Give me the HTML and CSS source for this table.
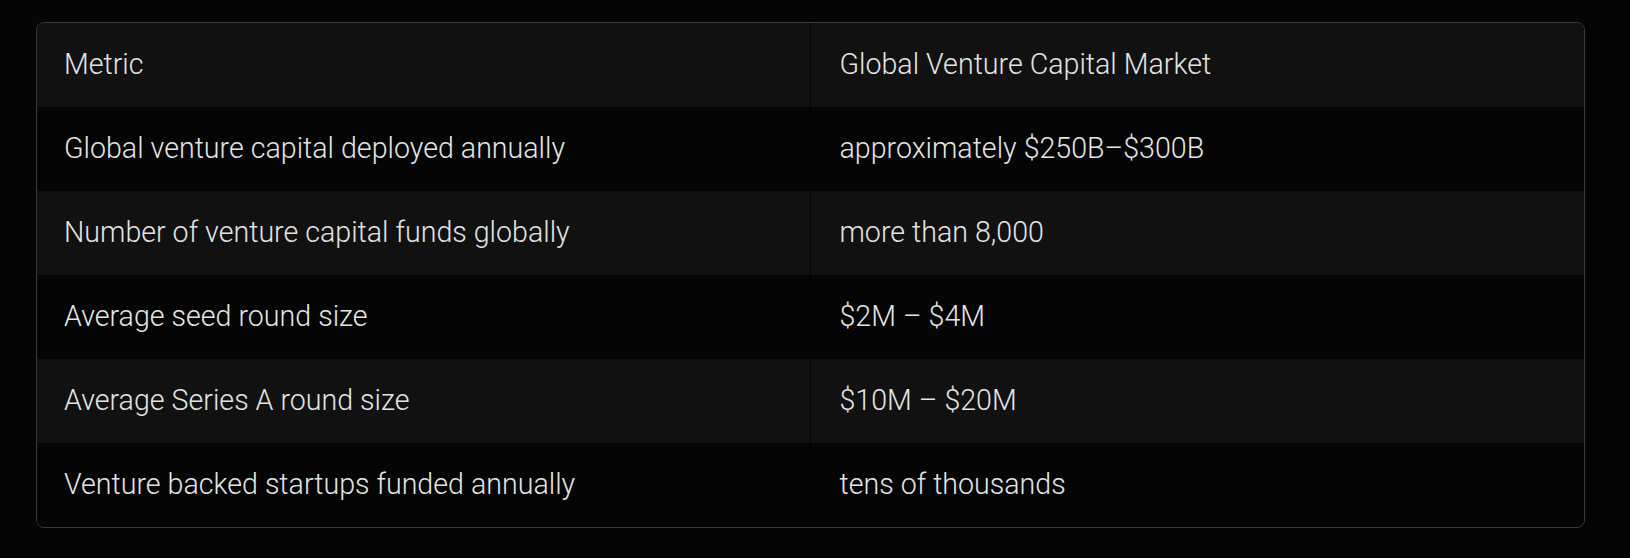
FILE: index.html
```html
<!DOCTYPE html>
<html lang="en">
<head>
<meta charset="utf-8">
<title>Global Venture Capital Market</title>
<link rel="stylesheet" href="styles.css">
</head>
<body>
<div class="table-wrap">
  <table class="metrics">
    <thead>
      <tr><th>Metric</th><th>Global Venture Capital Market</th></tr>
    </thead>
    <tbody>
      <tr><td>Global venture capital deployed annually</td><td>approximately $250B–$300B</td></tr>
      <tr><td>Number of venture capital funds globally</td><td>more than 8,000</td></tr>
      <tr><td>Average seed round size</td><td>$2M – $4M</td></tr>
      <tr><td>Average Series A round size</td><td>$10M – $20M</td></tr>
      <tr><td>Venture backed startups funded annually</td><td>tens of thousands</td></tr>
    </tbody>
  </table>
</div>
</body>
</html>
```
FILE: styles.css
```css
html, body {
  background: #050505;
}
body {
  margin: 0;
  padding: 22px 45px 0 36px;
  font-family: Roboto, "Noto Sans", sans-serif;
}
.table-wrap {
  border: 1px solid #3a3a3a;
  border-radius: 8px;
  overflow: hidden;
}
.metrics {
  width: 100%;
  border-collapse: separate;
  border-spacing: 0;
  table-layout: fixed;
}
.metrics th,
.metrics td {
  text-align: left;
  font-weight: 300;
  font-size: 28.6px;
  line-height: 36px;
  height: 36px;
  padding: 23px 28px 25px 27px;
  color: #e4e4e4;
}
.metrics th:first-child,
.metrics td:first-child {
  border-right: 1px solid #020202;
}
.metrics th:last-child,
.metrics td:last-child {
  padding-left: 29px;
}
.metrics thead tr,
.metrics tbody tr:nth-child(even) {
  background: #111111;
}
.metrics tbody tr:nth-child(odd) {
  background: #050505;
}
```
